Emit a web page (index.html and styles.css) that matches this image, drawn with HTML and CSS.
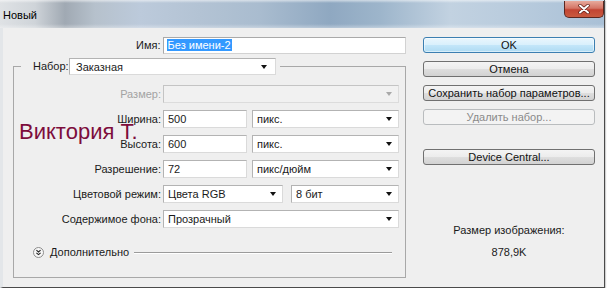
FILE: index.html
```html
<!DOCTYPE html>
<html lang="ru">
<head>
<meta charset="utf-8">
<title>Новый</title>
<link rel="stylesheet" href="styles.css">
</head>
<body>
<div class="window">
  <div class="titlebar">
    <span class="title">Новый</span>
    <div class="close">
      <svg width="14" height="10" viewBox="0 0 14 10"><path d="M3 1.5 L11 8.5 M11 1.5 L3 8.5" stroke="#5a1a12" stroke-width="3.4" stroke-linecap="round"/><path d="M3 1.5 L11 8.5 M11 1.5 L3 8.5" stroke="#ffffff" stroke-width="2" stroke-linecap="round"/></svg>
    </div>
  </div>
  <div class="content">
    <div class="main">
      <div class="name-row">
        <span class="lbl name-lbl">Имя:</span>
        <div class="field name-field"><span class="selection">Без имени-2</span></div>
      </div>
      <fieldset class="preset">
        <legend class="preset-legend">
          <span class="legend-lbl">Набор:</span>
          <div class="select preset-select">Заказная</div>
        </legend>
        <div class="grid">
          <span class="lbl disabled">Размер:</span>
          <div class="select select-disabled span2"></div>

          <span class="lbl">Ширина:</span>
          <div class="field">500</div>
          <div class="select unit">пикс.</div>

          <span class="lbl">Высота:</span>
          <div class="field">600</div>
          <div class="select unit">пикс.</div>

          <span class="lbl">Разрешение:</span>
          <div class="field">72</div>
          <div class="select unit">пикс/дюйм</div>

          <span class="lbl">Цветовой режим:</span>
          <div class="pair span2">
            <div class="select mode">Цвета RGB</div>
            <div class="select bits">8 бит</div>
          </div>

          <span class="lbl">Содержимое фона:</span>
          <div class="select span2">Прозрачный</div>
        </div>
        <div class="advanced">
          <svg class="adv-icon" width="11" height="11" viewBox="0 0 11 11"><circle cx="5.5" cy="5.5" r="5" fill="#f7f7f7" stroke="#8c8c8c"/><path d="M3.4 3.2 L5.5 5 L7.6 3.2 M3.4 5.8 L5.5 7.6 L7.6 5.8" fill="none" stroke="#222" stroke-width="1.1"/></svg>
          <span class="adv-text">Дополнительно</span>
          <span class="rule"></span>
        </div>
      </fieldset>
    </div>
    <div class="side">
      <div class="btn btn-default">OK</div>
      <div class="btn">Отмена</div>
      <div class="btn">Сохранить набор параметров...</div>
      <div class="btn btn-disabled">Удалить набор...</div>
      <div class="btn btn-device">Device Central...</div>
      <div class="size-info">
        <div class="size-line">Размер изображения:</div>
        <div class="size-line">878,9K</div>
      </div>
    </div>
  </div>
  <div class="watermark">Виктория Т.</div>
</div>
</body>
</html>
```

FILE: styles.css
```css
* { box-sizing: border-box; }

html, body {
  margin: 0;
  padding: 0;
  background: #ffffff;
}

body {
  font-family: "Liberation Sans", Arial, sans-serif;
  font-size: 11px;
  color: #1a1a1a;
}

.window {
  position: relative;
  width: 605px;
  height: 288px;
  background: #efefef;
  border-left: 3px solid #e3e6e9;
  border-right: 1px solid #4a4a4a;
  border-bottom: 1px solid #4a4a4a;
  box-shadow: 1px 1px 1px rgba(0,0,0,0.18);
}

.titlebar {
  height: 28px;
  margin-left: -3px;
  display: flex;
  align-items: flex-start;
  justify-content: space-between;
  background:
    linear-gradient(180deg, rgba(255,255,255,0.55) 0, rgba(255,255,255,0.0) 3px, rgba(255,255,255,0) 24px, rgba(255,255,255,0.35) 28px),
    linear-gradient(90deg, #dfe2e5 0, #cfd4d9 35px, #a0a9b3 65px, #b6c1cc 95px, #bccadb 140px, #b3c3d4 200px, #a9bccf 260px, #8fa8c1 330px, #9db5cb 380px, #c2d2e1 450px, #b8cbdd 520px, #a9c0d6 605px);
}

.title {
  padding: 9px 0 0 3px;
  line-height: 13px;
  color: #000;
}

.close {
  width: 40px;
  height: 17px;
  margin: 1px 0 0 0;
  display: flex;
  align-items: center;
  justify-content: center;
  border: 1px solid #5b2720;
  border-top: none;
  border-radius: 0 0 5px 5px;
  background: linear-gradient(180deg, #e7aa9c 0, #d47566 45%, #c24533 55%, #c95a3f 100%);
}

.content {
  display: flex;
  padding-top: 9px;
}

.main {
  width: 403px;
}

.lbl {
  text-align: right;
  padding-right: 2px;
  line-height: 18px;
  white-space: nowrap;
}

.lbl.disabled { color: #a3a3a3; }

.name-row {
  display: flex;
  height: 17px;
}

.name-lbl {
  width: 160px;
  line-height: 17px;
}

.field, .select {
  height: 18px;
  background: #ffffff;
  border: 1px solid;
  border-color: #b3b3b3 #dadada #dadada #b3b3b3;
  padding: 0 4px;
  line-height: 16px;
  white-space: nowrap;
  color: #1a1a1a;
}

.name-field {
  width: 244px;
  height: 17px;
  line-height: 15px;
  padding-left: 3px;
  border-color: #a9a9a9 #d2d2d2 #d2d2d2 #a9a9a9;
}

.selection {
  background: #3399ff;
  color: #ffffff;
  padding: 0 1px;
}

.select {
  display: flex;
  align-items: center;
  justify-content: space-between;
}

.select::after {
  content: "";
  width: 0;
  height: 0;
  margin-left: auto;
  margin-right: 2px;
  border-left: 3.5px solid transparent;
  border-right: 3.5px solid transparent;
  border-top: 4px solid #111;
}

.select-disabled {
  background: #f1f1f1;
  border-color: #c4c4c4 #dcdcdc #dcdcdc #c4c4c4;
}

.select-disabled::after { border-top-color: #a9a9a9; }

.preset {
  width: 393px;
  min-width: 0;
  margin: 4px 0 0 10px;
  padding: 10px 6px 18px 7px;
  border: 1px solid #a8a8a8;
}

.preset-legend {
  display: flex;
  padding: 0 4px 0 12px;
}

.legend-lbl {
  width: 36px;
  line-height: 17px;
}

.preset-select {
  width: 207px;
  height: 17px;
  padding-left: 6px;
  padding-right: 6px;
}

.grid {
  display: grid;
  grid-template-columns: 142px 84px 152px;
  grid-auto-rows: 18px;
  row-gap: 7px;
}

.span2 { grid-column: 2 / 4; }

.unit { margin-left: 5px; }

.pair {
  display: flex;
  justify-content: space-between;
}

.mode { width: 120px; }
.bits { width: 108px; }

.advanced {
  display: flex;
  align-items: center;
  height: 14px;
  margin-top: 17px;
}

.adv-icon {
  margin-left: 12px;
  flex: none;
}

.adv-text {
  margin-left: 6px;
}

.rule {
  flex: 1;
  height: 1px;
  margin: 1px 7px 0 5px;
  background: #9b9b9b;
  box-shadow: 0 1px 0 #ffffff;
}

.side {
  width: 172px;
  margin-left: 17px;
  display: flex;
  flex-direction: column;
}

.btn {
  height: 16px;
  margin-bottom: 8px;
  border: 1px solid #707070;
  border-radius: 3px;
  background: linear-gradient(180deg, #f4f4f4 0, #ececec 48%, #dedede 52%, #d2d2d2 100%);
  text-align: center;
  line-height: 14px;
  color: #111;
  white-space: nowrap;
}

.btn-default {
  border-color: #3c7fb1;
  background: linear-gradient(180deg, #eaf6fd 0, #d9f0fc 48%, #c3e6f9 52%, #aedbf3 100%);
  box-shadow: inset 0 0 0 1px rgba(255,255,255,0.5);
}

.btn-disabled {
  border-color: #b9bcbe;
  background: #f3f3f3;
  color: #8a8a8a;
}

.btn-device { margin-top: 16px; }

.size-info {
  margin-top: 46px;
  text-align: center;
}

.size-line {
  line-height: 22px;
}

.watermark {
  position: absolute;
  left: 16px;
  top: 121px;
  font-family: "Liberation Sans", Arial, sans-serif;
  font-size: 22px;
  line-height: 22px;
  color: #7d0d3c;
  white-space: nowrap;
}
```
